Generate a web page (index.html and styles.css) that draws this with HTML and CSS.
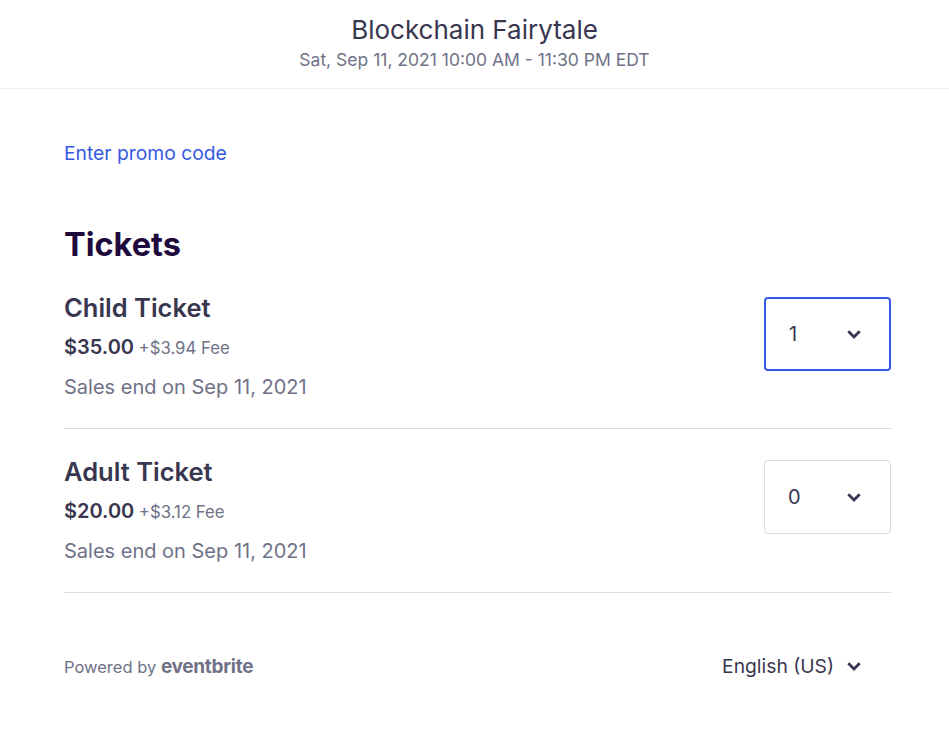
FILE: index.html
```html
<!DOCTYPE html>
<html lang="en">
<head>
<meta charset="utf-8">
<title>Blockchain Fairytale</title>
<link rel="stylesheet" href="styles.css">
</head>
<body>
<header class="header">
  <h1 class="event-title">Blockchain Fairytale</h1>
  <div class="event-date">Sat, Sep 11, 2021 10:00 AM - 11:30 PM EDT</div>
</header>
<main class="content">
  <a class="promo" href="#">Enter promo code</a>
  <h2 class="tickets-heading">Tickets</h2>
  <section class="ticket ticket-first">
    <div class="ticket-info">
      <div class="ticket-name">Child Ticket</div>
      <div class="ticket-price"><span class="price">$35.00</span> <span class="fee">+$3.94 Fee</span></div>
      <div class="ticket-sales">Sales end on Sep 11, 2021</div>
    </div>
    <div class="qty qty-active">
      <span class="qty-value">1</span>
      <svg class="chevron" viewBox="0 0 14 9" width="14" height="9"><path d="M1.3 1.3 L7 7 L12.7 1.3" fill="none" stroke="#39364f" stroke-width="2.8"/></svg>
    </div>
  </section>
  <section class="ticket">
    <div class="ticket-info">
      <div class="ticket-name">Adult Ticket</div>
      <div class="ticket-price"><span class="price">$20.00</span> <span class="fee">+$3.12 Fee</span></div>
      <div class="ticket-sales">Sales end on Sep 11, 2021</div>
    </div>
    <div class="qty">
      <span class="qty-value">0</span>
      <svg class="chevron" viewBox="0 0 14 9" width="14" height="9"><path d="M1.3 1.3 L7 7 L12.7 1.3" fill="none" stroke="#39364f" stroke-width="2.8"/></svg>
    </div>
  </section>
  <footer class="footer">
    <div class="powered">Powered by <span class="brand">eventbrite</span></div>
    <div class="lang">
      <span>English (US)</span>
      <svg class="chevron" viewBox="0 0 14 9" width="14" height="9"><path d="M1.3 1.3 L7 7 L12.7 1.3" fill="none" stroke="#39364f" stroke-width="2.8"/></svg>
    </div>
  </footer>
</main>
</body>
</html>
```

FILE: styles.css
```css
* { box-sizing: border-box; }
body {
  margin: 0;
  font-family: "Inter", "Lato", sans-serif;
  color: #39364f;
  background: #fff;
}
.header {
  height: 89px;
  border-bottom: 1px solid #eeedf2;
  display: flex;
  flex-direction: column;
  align-items: center;
  padding-top: 14px;
}
.event-title {
  margin: 0;
  font-size: 26px;
  font-weight: 400;
  line-height: 32px;
  color: #39364f;
}
.event-date {
  margin-top: 2px;
  font-size: 17.5px;
  line-height: 24px;
  color: #6f7287;
}
.content {
  padding: 0 58px 0 64px;
}
.promo {
  display: inline-block;
  margin-top: 52px;
  font-size: 19.3px;
  line-height: 24px;
  color: #3659e3;
  text-decoration: none;
}
.tickets-heading {
  margin: 58px 0 0;
  font-size: 32.5px;
  line-height: 44px;
  font-weight: 700;
  color: #1e0a3c;
}
.ticket {
  display: flex;
  justify-content: space-between;
  align-items: flex-start;
  border-bottom: 1px solid #dbdae3;
  padding-top: 27px;
  padding-bottom: 27px;
}
.ticket-first { padding-top: 25px; padding-bottom: 27px; }
.ticket-name {
  font-size: 25.5px;
  line-height: 32px;
  font-weight: 600;
  color: #39364f;
}
.ticket-price {
  margin-top: 11px;
  line-height: 24px;
}
.price {
  font-size: 20px;
  font-weight: 600;
  color: #39364f;
}
.fee {
  font-size: 16.8px;
  color: #6f7287;
}
.ticket-sales {
  margin-top: 13px;
  font-size: 20px;
  line-height: 28px;
  color: #6f7287;
}
.qty {
  width: 127px;
  height: 74px;
  margin-top: 4px;
  border: 1px solid #dbdae3;
  border-radius: 4px;
  display: flex;
  align-items: center;
  padding: 0 29px 0 23px;
  justify-content: space-between;
  font-size: 20px;
}
.qty-active {
  border: 2px solid #3659e3;
  padding: 0 28px 0 23px;
  margin-top: 5px;
}
.qty-value { color: #39364f; }
.chevron { display: block; }
.footer {
  display: flex;
  justify-content: space-between;
  align-items: center;
  padding-top: 61px;
  padding-right: 30px;
}
.powered {
  font-size: 16.5px;
  color: #6f7287;
}
.brand {
  font-weight: 700;
  font-size: 19px;
  letter-spacing: -0.3px;
}
.lang {
  display: flex;
  align-items: center;
  gap: 13px;
  font-size: 19.3px;
  color: #39364f;
}
```
